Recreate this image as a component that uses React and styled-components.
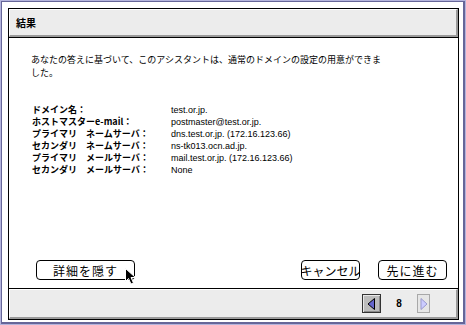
import React from 'react';
import styled, { createGlobalStyle } from 'styled-components';

const GlobalStyle = createGlobalStyle`
  html, body {
    margin: 0;
    padding: 0;
    background: #ffffff;
  }
  body {
    font-family: "Noto Sans CJK JP", "Liberation Sans", sans-serif;
    color: #000000;
  }
`;

const Frame = styled.div`
  width: 466px;
  height: 325px;
  box-sizing: border-box;
  border: 1px solid #b4b4dc;
`;

const Bezel = styled.div`
  height: 100%;
  box-sizing: border-box;
  border-style: solid;
  border-color: #666699;
  border-width: 1px 2px 2px 1px;
  padding: 6px 4px 2px 6px;
  background: #ffffff;
`;

const Inner = styled.div`
  height: 100%;
  box-sizing: border-box;
  border: 1px solid #000000;
  display: flex;
  flex-direction: column;
`;

const Panel = styled.div`
  background: #ececec;
  box-sizing: border-box;
  border-style: solid;
  border-width: 1px 2px 2px 1px;
  border-color: #ffffff #9a9a9a #9a9a9a #ffffff;
  display: flex;
  align-items: center;
  height: ${({ $h }) => $h}px;
`;

const HeaderWrap = styled.div`
  border-bottom: 1px solid #000000;
`;

const FooterWrap = styled.div`
  border-top: 1px solid #000000;
`;

const Title = styled.div`
  font-size: 10px;
  font-weight: 700;
  padding-left: 6px;
  letter-spacing: 0;
`;

const Content = styled.div`
  flex: 1;
  display: flex;
  flex-direction: column;
  padding: 15px 11px 8px 22px;
`;

const Intro = styled.p`
  margin: 0;
  width: 356px;
  font-size: 9px;
  line-height: 13px;
`;

const Details = styled.div`
  display: grid;
  grid-template-columns: 139px auto;
  margin-top: 25px;
  padding-left: 1px;
  font-size: 9px;
  line-height: 12px;
`;

const Label = styled.div`
  font-weight: 700;
  white-space: nowrap;
`;

const Value = styled.div`
  font-family: "Liberation Sans", "Noto Sans CJK JP", sans-serif;
  white-space: nowrap;
`;

const Buttons = styled.div`
  margin-top: auto;
  display: flex;
  align-items: center;
  padding-left: 5px;
`;

const Button = styled.div`
  position: relative;
  box-sizing: border-box;
  width: ${({ $w }) => $w}px;
  height: 20px;
  margin-left: ${({ $ml }) => $ml || 0}px;
  border: 1px solid #000000;
  border-radius: 4px;
  background: #ffffff;
  display: flex;
  align-items: center;
  justify-content: center;
  font-size: 12px;
  white-space: nowrap;
  letter-spacing: ${({ $ls }) => $ls || 0}px;
`;

const Spacer = styled.div`
  flex: 1;
`;

const Cursor = styled.svg`
  position: absolute;
  left: 88px;
  top: 7px;
`;

const Nav = styled.div`
  margin-left: auto;
  margin-right: 26px;
  display: flex;
  align-items: center;
`;

const NavButton = styled.div`
  box-sizing: border-box;
  width: ${({ $w }) => $w}px;
  height: 19px;
  display: flex;
  align-items: center;
  justify-content: center;
  border: 1px solid ${({ $off }) => ($off ? '#a8a8a8' : '#333333')};
  background: ${({ $off }) => ($off ? '#e6e6e6' : '#bcbcbc')};
  box-shadow: ${({ $off }) =>
    $off ? 'none' : 'inset 1px 1px 0 #e8e8e8, inset -1px -1px 0 #8a8a8a'};
`;

const Page = styled.div`
  font-family: "Liberation Sans", sans-serif;
  font-weight: 700;
  font-size: 10px;
  width: 36px;
  text-align: center;
`;

const rows = [
  ['ドメイン名：', 'test.or.jp.'],
  ['ホストマスターe-mail：', 'postmaster@test.or.jp.'],
  ['プライマリ　ネームサーバ：', 'dns.test.or.jp. (172.16.123.66)'],
  ['セカンダリ　ネームサーバ：', 'ns-tk013.ocn.ad.jp.'],
  ['プライマリ　メールサーバ：', 'mail.test.or.jp. (172.16.123.66)'],
  ['セカンダリ　メールサーバ：', 'None'],
];

export default function App() {
  return (
    <>
      <GlobalStyle />
      <Frame>
        <Bezel>
          <Inner>
            <HeaderWrap>
              <Panel $h={28}>
                <Title>結果</Title>
              </Panel>
            </HeaderWrap>

            <Content>
              <Intro>
                あなたの答えに基づいて、このアシスタントは、通常のドメインの設定の用意ができました。
              </Intro>
              <Details>
                {rows.map(([k, v]) => (
                  <React.Fragment key={k}>
                    <Label>{k}</Label>
                    <Value>{v}</Value>
                  </React.Fragment>
                ))}
              </Details>
              <Buttons>
                <Button $w={99} $ls={1}>
                  詳細を隠す
                  <Cursor width="12" height="17" viewBox="0 0 12 17">
                    <path
                      d="M0.5 0.5 L0.5 13.5 L3.5 10.5 L6 16 L8.5 15 L6 9.5 L10.5 9.5 Z"
                      fill="#000000"
                      stroke="#ffffff"
                      strokeWidth="1"
                    />
                  </Cursor>
                </Button>
                <Spacer />
                <Button $w={59}>キャンセル</Button>
                <Button $w={69} $ml={18} $ls={1}>先に進む</Button>
              </Buttons>
            </Content>

            <FooterWrap>
              <Panel $h={30}>
                <Nav>
                  <NavButton $w={19}>
                    <svg width="9" height="12" viewBox="0 0 9 12">
                      <path d="M7.5 0.5 L1 6 L7.5 11.5 Z" fill="#6666cc" stroke="#000000" strokeWidth="1" />
                    </svg>
                  </NavButton>
                  <Page>8</Page>
                  <NavButton $w={13} $off>
                    <svg width="8" height="12" viewBox="0 0 8 12">
                      <path d="M1 0.5 L7 6 L1 11.5 Z" fill="#ccccff" stroke="#9999cc" strokeWidth="1" />
                    </svg>
                  </NavButton>
                </Nav>
              </Panel>
            </FooterWrap>
          </Inner>
        </Bezel>
      </Frame>
    </>
  );
}
